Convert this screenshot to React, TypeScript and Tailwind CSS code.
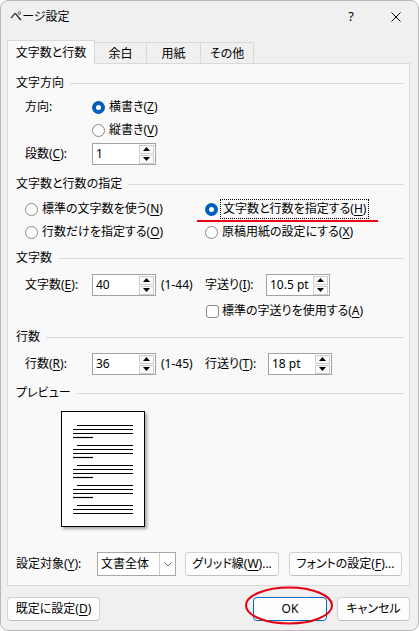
import React from 'react';

// Access-key letter, underlined like a Win32 mnemonic
const U: React.FC<{ children: React.ReactNode }> = ({ children }) => (
  <span className="underline decoration-1 underline-offset-[2px]">{children}</span>
);

const Radio: React.FC<{ checked?: boolean }> = ({ checked }) =>
  checked ? (
    <span className="w-[13px] h-[13px] shrink-0 rounded-full bg-[#005fb8] flex items-center justify-center">
      <span className="w-[5px] h-[5px] rounded-full bg-white" />
    </span>
  ) : (
    <span className="w-[13px] h-[13px] shrink-0 rounded-full border border-[#8a8a8a] bg-[#fdfdfd]" />
  );

const Arrow: React.FC<{ up?: boolean }> = ({ up }) => (
  <svg width="7" height="4" viewBox="0 0 7 4">
    {up ? <path d="M0 4 L3.5 0 L7 4 Z" fill="#000" /> : <path d="M0 0 L3.5 4 L7 0 Z" fill="#000" />}
  </svg>
);

const Spin: React.FC<{ value: string }> = ({ value }) => (
  <div className="w-[64px] h-[22px] shrink-0 border border-[#a3a3a3] bg-white flex items-center pl-[3px] pr-[1px]">
    <span className="flex-1 leading-none">{value}</span>
    <div className="flex flex-col gap-[1px]">
      <span className="w-[15px] h-[9px] border border-[#cdcdcd] bg-[#fbfbfb] flex items-center justify-center">
        <Arrow up />
      </span>
      <span className="w-[15px] h-[9px] border border-[#cdcdcd] bg-[#fbfbfb] flex items-center justify-center">
        <Arrow />
      </span>
    </div>
  </div>
);

const Group: React.FC<{ title: string; mt: string }> = ({ title, mt }) => (
  <div className={`h-[20px] flex items-center gap-[6px] ${mt}`}>
    <span className="leading-none">{title}</span>
    <div className="flex-1 h-px bg-[#dadada]" />
  </div>
);

const Button: React.FC<{ w: string; children: React.ReactNode; primary?: boolean }> = ({ w, children, primary }) => (
  <div
    className={`${w} h-[24px] shrink-0 rounded-[4px] border flex items-center justify-center leading-none bg-[#fdfdfd] ${
      primary ? 'border-[#0067c0]' : 'border-[#d1d1d1] border-b-[#c0c0c0]'
    }`}
  >
    {children}
  </div>
);

const Tab: React.FC<{ w: string; children: React.ReactNode; active?: boolean }> = ({ w, children, active }) =>
  active ? (
    <div className={`${w} h-[24px] -mb-px relative z-10 border border-b-0 border-[#d9d9d9] bg-[#f9f9f9] flex items-center justify-center leading-none`}>
      {children}
    </div>
  ) : (
    <div className={`${w} h-[21px] -ml-px border border-b-0 border-[#d9d9d9] bg-[#f0f0f0] flex items-center justify-center leading-none pt-[1px]`}>
      {children}
    </div>
  );

// page thumbnail: groups of lines, first indented, last short
const Preview: React.FC = () => {
  const starts = [13, 33, 53, 73, 93];
  return (
    <div className="w-[84px] h-[116px] border border-black bg-white shadow-[2px_2px_3px_rgba(0,0,0,0.35)] ml-[45px] mt-[8px]">
      <svg width="82" height="114" viewBox="0 0 82 114">
        {starts.map((y, i) => (
          <g key={y} stroke="#000" strokeWidth="1.2">
            <line x1="15" x2="71" y1={y + 0.5} y2={y + 0.5} />
            <line x1="11" x2="71" y1={y + 4.5} y2={y + 4.5} />
            <line x1="11" x2="71" y1={y + 8.5} y2={y + 8.5} />
            {i < 4 && <line x1="11" x2="31" y1={y + 12.5} y2={y + 12.5} />}
          </g>
        ))}
      </svg>
    </div>
  );
};

const App: React.FC = () => {
  return (
    <div className="w-[419px] h-[631px] bg-white relative text-[12px] text-black font-['Noto_Sans','Noto_Sans_CJK_JP',sans-serif] [font-feature-settings:'palt']">
      <div className="h-full rounded-[8px] border border-[#b8b8b8] bg-[#f0f0f0] flex flex-col overflow-hidden">
        {/* title bar */}
        <div className="h-[31px] shrink-0 flex items-center pl-[9px]">
          <span className="leading-none">ページ設定</span>
          <span className="ml-auto leading-none text-[13px]">?</span>
          <svg className="ml-[37px] mr-[17px]" width="10" height="10" viewBox="0 0 10 10">
            <path d="M0.5 0.5 L9.5 9.5 M9.5 0.5 L0.5 9.5" stroke="#000" strokeWidth="1" />
          </svg>
        </div>

        {/* tabs */}
        <div className="mt-[8px] ml-[6px] flex items-end h-[23px]">
          <Tab w="w-[88px]" active>
            文字数と行数
          </Tab>
          <Tab w="w-[53px]">余白</Tab>
          <Tab w="w-[55px]">用紙</Tab>
          <Tab w="w-[54px]">その他</Tab>
        </div>

        <div className="ml-[6px] w-[403px] h-[523px] shrink-0 border border-[#d9d9d9] bg-[#f9f9f9] pl-[8px] pr-[5px] flex flex-col">
          <Group title="文字方向" mt="mt-[9px]" />
          <div className="h-[20px] mt-[4px] flex items-center ml-[9px]">
            <span className="w-[67px] leading-none">方向:</span>
            <Radio checked />
            <span className="ml-[4px] leading-none">
              横書き(<U>Z</U>)
            </span>
          </div>
          <div className="h-[20px] mt-[3px] flex items-center ml-[76px]">
            <Radio />
            <span className="ml-[4px] leading-none">
              縦書き(<U>V</U>)
            </span>
          </div>
          <div className="h-[22px] mt-[3px] flex items-center ml-[9px]">
            <span className="w-[67px] leading-none">
              段数(<U>C</U>):
            </span>
            <Spin value="1" />
          </div>

          <Group title="文字数と行数の指定" mt="mt-[9px]" />
          <div className="h-[20px] mt-[5px] flex items-center ml-[9px]">
            <div className="w-[180px] flex items-center">
              <Radio />
              <span className="ml-[4px] leading-none">
                標準の文字数を使う(<U>N</U>)
              </span>
            </div>
            <Radio checked />
            <span className="ml-[2px] px-[2px] py-[3px] leading-none border border-dotted border-black">
              文字数と行数を指定する(<U>H</U>)
            </span>
          </div>
          <div className="h-[20px] mt-[3px] flex items-center ml-[9px]">
            <div className="w-[180px] flex items-center">
              <Radio />
              <span className="ml-[4px] leading-none">
                行数だけを指定する(<U>O</U>)
              </span>
            </div>
            <Radio />
            <span className="ml-[4px] leading-none">
              原稿用紙の設定にする(<U>X</U>)
            </span>
          </div>

          <Group title="文字数" mt="mt-[6px]" />
          <div className="h-[22px] mt-[6px] flex items-center ml-[9px]">
            <div className="w-[180px] flex items-center">
              <span className="w-[67px] leading-none">
                文字数(<U>E</U>):
              </span>
              <Spin value="40" />
              <span className="ml-[5px] leading-none">(1-44)</span>
            </div>
            <span className="w-[61px] leading-none">
              字送り(<U>I</U>):
            </span>
            <Spin value="10.5 pt" />
          </div>
          <div className="h-[20px] mt-[5px] flex items-center ml-[190px]">
            <span className="w-[13px] h-[13px] rounded-[3px] border border-[#8a8a8a] bg-[#fdfdfd]" />
            <span className="ml-[3px] leading-none">
              標準の字送りを使用する(<U>A</U>)
            </span>
          </div>

          <Group title="行数" mt="mt-[6px]" />
          <div className="h-[22px] mt-[6px] flex items-center ml-[9px]">
            <div className="w-[180px] flex items-center">
              <span className="w-[67px] leading-none">
                行数(<U>R</U>):
              </span>
              <Spin value="36" />
              <span className="ml-[5px] leading-none">(1-45)</span>
            </div>
            <span className="w-[63px] leading-none">
              行送り(<U>T</U>):
            </span>
            <Spin value="18 pt" />
          </div>

          <Group title="プレビュー" mt="mt-[8px]" />
          <Preview />

          <div className="h-[24px] mt-[25px] flex items-center">
            <span className="w-[81px] leading-none">
              設定対象(<U>Y</U>):
            </span>
            <div className="w-[79px] h-[24px] border border-[#a8a8a8] bg-white flex items-center">
              <span className="flex-1 pl-[3px] leading-none">文書全体</span>
              <span className="w-[16px] h-full border-l border-[#d0d0d0] flex items-center justify-center">
                <svg width="8" height="5" viewBox="0 0 8 5">
                  <path d="M0.5 0.5 L4 4 L7.5 0.5" fill="none" stroke="#666" strokeWidth="1" />
                </svg>
              </span>
            </div>
            <div className="ml-[9px]">
              <Button w="w-[94px]">
                グリッド線(<U>W</U>)...
              </Button>
            </div>
            <div className="ml-[10px]">
              <Button w="w-[113px]">
                フォントの設定(<U>F</U>)...
              </Button>
            </div>
          </div>
        </div>

        {/* dialog buttons */}
        <div className="mt-[11px] ml-[6px] w-[403px] flex items-center">
          <Button w="w-[93px]">
            既定に設定(<U>D</U>)
          </Button>
          <div className="ml-auto flex gap-[10px]">
            <Button w="w-[74px]" primary>
              OK
            </Button>
            <Button w="w-[73px]">キャンセル</Button>
          </div>
        </div>
      </div>

      {/* red markup drawn over the dialog */}
      <svg className="absolute inset-0 pointer-events-none" width="419" height="631" viewBox="0 0 419 631">
        <line x1="197" y1="221" x2="378" y2="221" stroke="#e60012" strokeWidth="2" />
        <ellipse cx="289" cy="605.5" rx="43" ry="18" fill="none" stroke="#e60012" strokeWidth="2" />
      </svg>
    </div>
  );
};

export default App;
